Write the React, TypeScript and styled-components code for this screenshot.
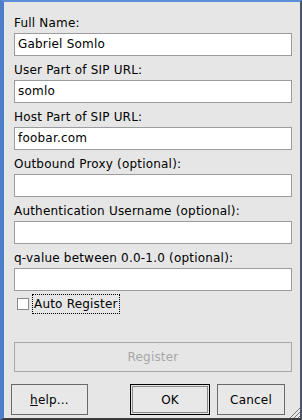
import React from 'react'
import styled, { createGlobalStyle } from 'styled-components'

const GlobalStyle = createGlobalStyle`
  html, body {
    margin: 0;
    padding: 0;
    background: #e6e6e6;
  }
  body {
    font-family: "DejaVu Sans", "Liberation Sans", sans-serif;
    font-size: 12px;
    letter-spacing: 0.2px;
    color: #000;
  }
`

const fields = [
  { label: 'Full Name:', value: 'Gabriel Somlo' },
  { label: 'User Part of SIP URL:', value: 'somlo' },
  { label: 'Host Part of SIP URL:', value: 'foobar.com' },
  { label: 'Outbound Proxy (optional):', value: '' },
  { label: 'Authentication Username (optional):', value: '' },
  { label: 'q-value between 0.0-1.0 (optional):', value: '' },
]

export default function App(): JSX.Element {
  return (
    <>
      <GlobalStyle />
      <Frame>
        <Form>
          {fields.map((f) => (
            <Field key={f.label}>
              <Label>{f.label}</Label>
              <Input>{f.value}</Input>
            </Field>
          ))}
          <CheckRow>
            <CheckBox />
            <CheckLabel>Auto Register</CheckLabel>
          </CheckRow>
          <RegisterButton>Register</RegisterButton>
        </Form>
        <ButtonRow>
          <Button width={77}>
            <u>h</u>elp...
          </Button>
          <Spacer />
          <Button width={80} isDefault>
            OK
          </Button>
          <Button width={68}>Cancel</Button>
        </ButtonRow>
        <Grip width="12" height="12" viewBox="0 0 12 12">
          <line x1="12" y1="2" x2="2" y2="12" stroke="#7a7a7a" strokeWidth="1" />
          <line x1="12" y1="6" x2="6" y2="12" stroke="#7a7a7a" strokeWidth="1" />
          <line x1="12" y1="10" x2="10" y2="12" stroke="#7a7a7a" strokeWidth="1" />
        </Grip>
      </Frame>
    </>
  )
}

const Frame = styled.div`
  position: relative;
  box-sizing: border-box;
  width: 302px;
  height: 420px;
  background: #e6e6e6;
  border-top: 2px solid #5d8fd6;
  border-left: 4px solid #4b7dc8;
  border-right: 2px solid #4a5668;
  border-bottom: 2px solid #3a3a3a;
  display: flex;
  flex-direction: column;
`

const Form = styled.div`
  display: flex;
  flex-direction: column;
  padding: 7px 8px 0 10px;
`

const Field = styled.div`
  display: flex;
  flex-direction: column;
`

const Label = styled.div`
  height: 24px;
  padding-top: 5px;
  line-height: 18px;
  box-sizing: border-box;
  white-space: nowrap;
`

const Input = styled.div`
  box-sizing: border-box;
  height: 23px;
  background: #fff;
  border: 1px solid #9c9c9c;
  padding: 0 3px;
  line-height: 21px;
  white-space: nowrap;
`

const CheckRow = styled.div`
  display: flex;
  align-items: center;
  height: 20px;
  margin-top: 3px;
  padding-left: 3px;
`

const CheckBox = styled.div`
  box-sizing: border-box;
  width: 12px;
  height: 12px;
  background: #fff;
  border: 1px solid #8a8a8a;
  margin-right: 3px;
`

const CheckLabel = styled.div`
  box-sizing: border-box;
  height: 20px;
  line-height: 18px;
  padding: 0 1px;
  border: 1px dotted #000;
`

const RegisterButton = styled.div`
  box-sizing: border-box;
  margin-top: 28px;
  height: 30px;
  border: 1px solid #a8a8a8;
  background: #e6e6e6;
  color: #a6a6a6;
  display: flex;
  align-items: center;
  justify-content: center;
`

const ButtonRow = styled.div`
  display: flex;
  gap: 7px;
  margin-top: 12px;
  padding: 0 15px 0 7px;
`

const Spacer = styled.div`
  flex: 1;
`

const Button = styled.div<{ width: number; isDefault?: boolean }>`
  box-sizing: border-box;
  width: ${(p) => p.width}px;
  height: 31px;
  border: 1px solid ${(p) => (p.isDefault ? '#000' : '#6a6a6a')};
  box-shadow: ${(p) => (p.isDefault ? 'inset 0 0 0 1px #e6e6e6, inset 0 0 0 2px #8a8a8a' : 'none')};
  background: #e8e8e8;
  display: flex;
  align-items: center;
  justify-content: center;
`

const Grip = styled.svg`
  position: absolute;
  right: 0;
  bottom: 0;
`
